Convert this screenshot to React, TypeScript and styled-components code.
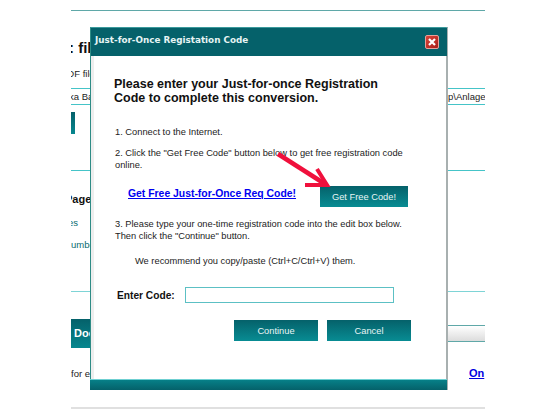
import React from 'react';
import styled, { createGlobalStyle } from 'styled-components';

const GlobalStyle = createGlobalStyle`
	html, body {
		margin: 0;
		padding: 0;
		background: #fff;
	}
	body {
		font-family: "Liberation Sans", Arial, sans-serif;
		color: #111;
	}
`;

const Screen = styled.div`
	position: relative;
	width: 557px;
	height: 418px;
	overflow: hidden;
`;

const Page = styled.div`
	width: 414px;
	height: 418px;
	margin-left: 71px;
	overflow: hidden;
	padding-top: 10px;
	box-sizing: border-box;
	font-size: 10px;
`;

const Rule = styled.div<{ $color: string; $top: number; $size?: number }>`
	height: ${(p) => p.$size ?? 1}px;
	margin-top: ${(p) => p.$top}px;
	background: ${(p) => p.$color};
`;

const Heading = styled.div`
	margin: 28px 0 0 -2px;
	font-size: 15px;
	line-height: 18px;
	font-weight: bold;
	white-space: nowrap;
`;

const SmallText = styled.div<{ $top: number; $left?: number; $color?: string }>`
	margin: ${(p) => p.$top}px 0 0 ${(p) => p.$left ?? 0}px;
	font-size: 9.5px;
	line-height: 12px;
	white-space: nowrap;
	color: ${(p) => p.$color ?? '#222'};
`;

const PathRow = styled.div`
	display: flex;
	justify-content: space-between;
	height: 15px;
	margin-top: 8px;
	border-top: 1px solid #45c4c8;
	border-bottom: 1px solid #45c4c8;
	font-size: 9.5px;
	line-height: 15px;
	white-space: nowrap;
	color: #222;
`;

const PathStart = styled.span`
	margin-left: -2px;
`;

const PathEnd = styled.span`
	width: 37px;
	overflow: hidden;
`;

const Stub = styled.div`
	width: 4px;
	height: 22px;
	margin-top: 7px;
	background: linear-gradient(#05616a, #07878f);
`;

const SubHeading = styled.div`
	margin: 22px 0 0 -6px;
	font-size: 11px;
	line-height: 13px;
	font-weight: bold;
	white-space: nowrap;
`;

const DocBar = styled.div`
	display: flex;
	align-items: center;
	height: 29px;
	margin-top: 27px;
`;

const DocTitle = styled.div`
	width: 60px;
	height: 29px;
	padding-left: 3px;
	box-sizing: border-box;
	background: linear-gradient(#05616a, #07878f);
	color: #fff;
	font-size: 11px;
	line-height: 29px;
	font-weight: bold;
	white-space: nowrap;
`;

const DocRest = styled.div`
	flex: 1;
	height: 15px;
	border-top: 1px solid #5fa8a8;
	border-bottom: 1px solid #5fa8a8;
	background: linear-gradient(#ffffff, #dcdcdc);
`;

const FooterRow = styled.div`
	display: flex;
	justify-content: space-between;
	align-items: center;
	height: 14px;
	margin-top: 18px;
	font-size: 9.5px;
	color: #222;
	white-space: nowrap;
`;

const OnLink = styled.a`
	color: #0000e0;
	font-size: 11px;
	font-weight: bold;
	text-decoration: underline;
	width: 16px;
	overflow: hidden;
`;

const Dialog = styled.div`
	position: absolute;
	left: 90px;
	top: 27px;
	width: 358px;
	height: 363px;
	box-sizing: border-box;
	display: flex;
	flex-direction: column;
	background: #fff;
	border-top: 1px solid #3b9a9c;
	border-left: 1px solid #2f8c86;
	border-right: 2px solid #a8b0b0;
`;

const TitleBar = styled.div`
	display: flex;
	align-items: center;
	justify-content: space-between;
	flex: none;
	height: 28px;
	margin-right: -1px;
	padding: 0 8px 0 4px;
	background: #05616a;
	color: #e6f4f4;
	font-family: "DejaVu Sans", sans-serif;
	font-size: 8.8px;
	font-weight: bold;
`;

const TitleText = styled.span`
	padding-bottom: 4px;
`;

const CloseButton = styled.button`
	display: flex;
	align-items: center;
	justify-content: center;
	width: 14px;
	height: 14px;
	padding: 0;
	border: 1px solid #e8a09a;
	border-radius: 2px;
	background: linear-gradient(135deg, #d8453a, #a81f1a);
`;

const Body = styled.div`
	flex: 1;
	padding: 21px 0 0 20px;
	border-left: 3px solid #eeeeee;
`;

const Lead = styled.div`
	font-size: 12.5px;
	line-height: 14px;
	font-weight: bold;
	color: #111;
`;

const Paragraph = styled.div<{ $top: number; $left?: number }>`
	margin: ${(p) => p.$top}px 0 0 ${(p) => p.$left ?? 1}px;
	font-size: 9.3px;
	line-height: 12px;
	color: #1c1c1c;
	white-space: nowrap;
`;

const LinkRow = styled.div`
	display: flex;
	align-items: center;
	justify-content: space-between;
	width: 280px;
	height: 21px;
	margin: 15px 0 0 14px;
`;

const FreeLink = styled.a`
	margin-bottom: 6px;
	color: #0000f0;
	font-size: 10.4px;
	font-weight: bold;
	text-decoration: underline;
	white-space: nowrap;
`;

const TealButton = styled.button<{ $width: number }>`
	width: ${(p) => p.$width}px;
	height: 21px;
	padding: 0;
	border: none;
	background: linear-gradient(#05616a, #088c93);
	color: #e8f4f4;
	font-family: "Liberation Sans", Arial, sans-serif;
	font-size: 9.3px;
`;

const CodeRow = styled.div`
	display: flex;
	align-items: center;
	gap: 10px;
	height: 16px;
	margin: 20px 0 0 3px;
`;

const CodeLabel = styled.label`
	font-size: 10.2px;
	font-weight: bold;
	color: #111;
	white-space: nowrap;
`;

const CodeInput = styled.input`
	width: 209px;
	height: 16px;
	padding: 0;
	box-sizing: border-box;
	border: 1px solid #5cc0c4;
	background: #fff;
`;

const Actions = styled.div`
	display: flex;
	gap: 9px;
	margin: 17px 0 0 120px;
`;

const BottomBar = styled.div`
	flex: none;
	height: 11px;
	margin: 0 -1px 0 -1px;
	border-top: 1px solid #6fd0d2;
	box-sizing: border-box;
	background: linear-gradient(#078088, #05616a);
`;

const Arrow = styled.svg`
	position: absolute;
	left: 270px;
	top: 145px;
`;

export default function App() {
	return (
		<Screen>
			<GlobalStyle />
			<Page>
				<Rule $color="#5fa8a8" $top={0} />
				<Heading>: fil</Heading>
				<SmallText $top={11} $left={-10}>PDF file</SmallText>
				<PathRow>
					<PathStart>ka Ba</PathStart>
					<PathEnd>p\Anlagen</PathEnd>
				</PathRow>
				<Stub />
				<Rule $color="#45c4c8" $top={36} />
				<SubHeading>Page</SubHeading>
				<SmallText $top={11} $left={-3} $color="#0a6b70">es</SmallText>
				<SmallText $top={10} $color="#0a6b70">umbe</SmallText>
				<Rule $color="#7ed4d6" $top={40} />
				<DocBar>
					<DocTitle>Doc</DocTitle>
					<DocRest />
				</DocBar>
				<FooterRow>
					<span>for e</span>
					<OnLink href="#">On</OnLink>
				</FooterRow>
				<Rule $color="#e0e0e0" $top={27} $size={2} />
			</Page>
			<Dialog>
				<TitleBar>
					<TitleText>Just-for-Once Registation Code</TitleText>
					<CloseButton aria-label="Close">
						<svg width="10" height="10" viewBox="0 0 10 10">
							<path d="M2 2 L8 8 M8 2 L2 8" stroke="#fff" strokeWidth="2.2" />
						</svg>
					</CloseButton>
				</TitleBar>
				<Body>
					<Lead>
						Please enter your Just-for-once Registration
						<br />
						Code to complete this conversion.
					</Lead>
					<Paragraph $top={21}>1. Connect to the Internet.</Paragraph>
					<Paragraph $top={9}>
						2. Click the "Get Free Code" button below to get free registration code
						<br />
						online.
					</Paragraph>
					<LinkRow>
						<FreeLink href="#">Get Free Just-for-Once Req Code!</FreeLink>
						<TealButton $width={88}>Get Free Code!</TealButton>
					</LinkRow>
					<Paragraph $top={11}>
						3. Please type your one-time registration code into the edit box below.
						<br />
						Then click the "Continue" button.
					</Paragraph>
					<Paragraph $top={13} $left={21}>We recommend you copy/paste (Ctrl+C/Ctrl+V) them.</Paragraph>
					<CodeRow>
						<CodeLabel htmlFor="code">Enter Code:</CodeLabel>
						<CodeInput id="code" />
					</CodeRow>
					<Actions>
						<TealButton $width={84}>Continue</TealButton>
						<TealButton $width={84}>Cancel</TealButton>
					</Actions>
				</Body>
				<BottomBar />
			</Dialog>
			<Arrow width="70" height="50" viewBox="0 0 70 50">
				<path d="M8 9 L55 39" stroke="#f0103c" strokeWidth="4.5" fill="none" />
				<path d="M35 40 L57 40 L47 24" stroke="#f0103c" strokeWidth="4" fill="none" />
			</Arrow>
		</Screen>
	);
}
